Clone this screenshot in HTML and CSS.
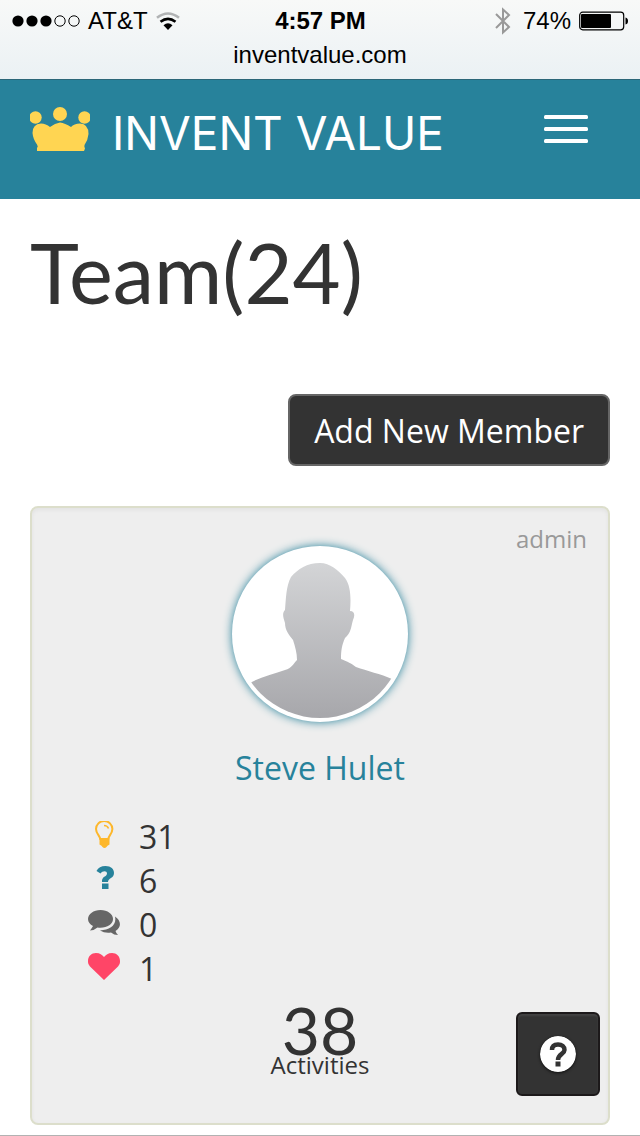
FILE: index.html
```html
<!DOCTYPE html>
<html lang="en">
<head>
<meta charset="utf-8">
<meta name="viewport" content="width=device-width, initial-scale=1">
<title>Team - Invent Value</title>
<link rel="stylesheet" href="styles.css">
</head>
<body>
<div class="browser-bar">
  <div class="status">
    <div class="status-left">
      <svg class="signal" width="68" height="12" viewBox="0 0 68 12" aria-hidden="true">
        <circle cx="6" cy="6" r="5.6"/><circle cx="20" cy="6" r="5.6"/><circle cx="34" cy="6" r="5.6"/>
        <g fill="none" stroke="#000"><circle cx="48" cy="6" r="5.2"/><circle cx="62" cy="6" r="5.2"/></g>
      </svg>
      <span>AT&amp;T</span>
      <svg width="24" height="18" viewBox="0 0 24 18" aria-hidden="true">
        <g fill="none" stroke-width="2.6"><path d="M1 5.8Q12-2.8 23 5.8" stroke="#b1b3b4"/><path d="M4.5 9.8Q12 4 19.5 9.8" stroke="#000"/></g>
        <path d="M7.5 13.2Q12 9.5 16.5 13.2L12 18Z"/>
      </svg>
    </div>
    <strong class="time">4:57 PM</strong>
    <div class="status-right">
      <svg width="16" height="28" viewBox="0 0 16 28" fill="none" stroke="#999" stroke-width="2" aria-hidden="true"><path d="M1 7 14 20 8 25.5V2.5L14 8 1 21"/></svg>
      <span>74%</span>
      <svg width="50" height="20" viewBox="0 0 50 20" aria-hidden="true">
        <rect x=".7" y="1.2" width="44" height="17.6" rx="3" fill="none" stroke="#000" stroke-width="1.2"/>
        <rect x="2" y="3" width="30" height="14" rx="1"/>
        <path d="M46.5 6.5Q49 7 49 10T46.5 13.5Z"/>
      </svg>
    </div>
  </div>
  <div class="address">inventvalue.com</div>
</div>

<header class="site-header">
  <a class="brand" href="#">
    <svg width="60" height="44" viewBox="0 0 60 44" fill="#ffd552" aria-hidden="true">
      <circle cx="30" cy="7" r="7"/><circle cx="5.5" cy="10.5" r="6.2"/><circle cx="54.5" cy="10.5" r="6.2"/>
      <path d="M7 44V41Q8.500 39.500 7 37.500 3 32 2.500 26 2.500 17 11 16.500 16 16.500 20 20 25 16 30 15.500 35 16 41 20 44 16.500 50 16.500 58.500 17 58.500 27 58 33 54.500 38 54 39.500 55 41.500L54 44Z"/>
    </svg>
    <span>INVENT VALUE</span>
  </a>
  <button class="menu" type="button" aria-label="Menu">
    <svg width="44" height="28" viewBox="0 0 44 28" fill="#fff" aria-hidden="true"><rect width="44" height="4" rx="1.5"/><rect y="12" width="44" height="4" rx="1.5"/><rect y="24" width="44" height="4" rx="1.5"/></svg>
  </button>
</header>

<main class="page">
  <h1>Team(24)</h1>
  <div class="actions"><button class="add" type="button">Add New Member</button></div>
  <article class="card">
    <span class="role">admin</span>
    <svg class="avatar" width="176" height="176" viewBox="0 0 176 176" aria-hidden="true">
      <defs>
        <linearGradient id="shade" gradientUnits="userSpaceOnUse" x1="0" y1="18" x2="0" y2="172"><stop stop-color="#d3d4d6"/><stop offset="1" stop-color="#a7a7ab"/></linearGradient>
        <clipPath id="disc"><circle cx="88" cy="88" r="84"/></clipPath>
      </defs>
      <path clip-path="url(#disc)" fill="url(#shade)" d="M88 17C75 17 66 23 59 31 54 40 54 53 53 64 50 67 51 71 53 77 53 84 57 89 61 94 63 100 65 107 65 114 61 118 60 122 53 124 42 128 28 131 18 137L8 176H168L160 133C149 128 135 125 124 121 119 117 116 116 109 113 109 104 110 99 113 92 119 87 119 81 121 74 123 70 123 65 118 65 119 53 119 40 113 32 106 24 98 17 88 17Z"/>
    </svg>
    <a class="name" href="#">Steve Hulet</a>
    <ul class="stats">
      <li><svg width="32" height="32" viewBox="0 0 32 32" aria-hidden="true"><g fill="none" stroke="#fdb72b" stroke-width="2"><path d="M12.500 19C12.500 15 8 13 8 8A8.200 8 0 0 1 24.400 8C24.400 13 20 15 20 19"/><path d="M16 4.500Q19.500 4.500 20.500 7.500" stroke-width="1.500"/></g><path fill="#fdb72b" d="M11.500 17H21.500V23.500Q19 24.500 18.500 26 16.500 28 14.500 26 14 24.500 11.500 23.500Z"/></svg><span>31</span></li>
      <li><svg width="32" height="32" viewBox="0 0 32 32" fill="#27829b" aria-hidden="true"><path d="M8.500 6Q11 1 17.500 1C23 1 26 4 26 8 26 13.500 20 13 20 17H14C13.500 11 19 12 19 8.500 19 5.500 14.500 5.500 12.500 8.500Z"/><rect x="14" y="18.500" width="6.500" height="5.500"/></svg><span>6</span></li>
      <li><svg width="32" height="32" viewBox="0 0 32 32" fill="#666" aria-hidden="true"><path d="M12.500 1C5.500 1 0 5 0 10 0 13 2 15.500 5 17Q4 19 2 21.500 6 21.500 9.500 18.500C18 19.500 25 16 25 10 25 5 19.500 1 12.500 1Z"/><path d="M27 7.500C33 11.500 34 18 27.500 22Q28 24 30 26 26 26 23 23.500 17 24.500 12 21.500C22 21 29 16 27 7.500Z"/></svg><span>0</span></li>
      <li><svg width="32" height="32" viewBox="0 0 32 32" fill="#ff4567" aria-hidden="true"><path d="M16 27 2 13.500C0 11 0 9.500 0 8 0 3 3.500 0 8 0 12 0 14 2 16 4 18 2 20 0 24 0 28.500 0 32 3 32 8 32 9.500 32 11 30 13.500Z"/></svg><span>1</span></li>
    </ul>
    <div class="total"><span class="count">38</span><span class="label">Activities</span></div>
  </article>
</main>

<button class="help" type="button" aria-label="Help">
  <svg width="36" height="36" viewBox="0 0 36 36" aria-hidden="true"><circle cx="18" cy="18" r="18" fill="#fff"/><path d="M12 14C12 10 14 8.500 18 8.500S24.500 10.500 24.500 14C24.500 18 18 18 18 24" fill="none" stroke="#333" stroke-width="4.500"/><rect x="15.500" y="25.500" width="5" height="5" fill="#333"/></svg>
</button>
</body>
</html>
```
FILE: styles.css
```css
* { box-sizing: border-box; }
body {
  margin: 0;
  min-height: 100vh;
  background: #fff;
  border-bottom: 1px solid #b2b2b2;
  color: #333;
  font-family: "Open Sans", sans-serif;
}
button { font: inherit; cursor: pointer; }
a { text-decoration: none; }
svg { display: block; flex: none; }

.browser-bar {
  height: 80px;
  padding-top: 5px;
  border-bottom: 1px solid #2b6678;
  background: linear-gradient(#f8f9f8, #ebf1f4);
  color: #000;
  font-family: "Liberation Sans", Arial, sans-serif;
  font-size: 24px;
}
.status {
  display: grid;
  grid-template-columns: 1fr auto 1fr;
  align-items: center;
  height: 32px;
  padding: 0 11px 0 12px;
}
.status-left, .status-right { display: flex; align-items: center; gap: 8px; }
.status-right { justify-content: flex-end; }
.status-right span { margin-left: 4px; }
.address { line-height: 36px; text-align: center; }

.site-header {
  display: flex;
  align-items: flex-start;
  justify-content: space-between;
  height: 119px;
  padding: 27px 52px 0 30px;
  background: #27829b;
}
.brand {
  display: flex;
  gap: 22px;
  color: #fff;
  font: 400 46px/52px Inter, sans-serif;
  white-space: nowrap;
}
.menu { margin-top: 8px; padding: 0; border: 0; background: none; }

.page { padding: 21px 30px 9px; }
h1 { margin: 0; font: 400 83px/104px Lato, sans-serif; }
.actions { display: flex; justify-content: flex-end; margin: 70px 0 40px; }
.add {
  height: 72px;
  padding: 0 24px;
  border: 2px solid #666;
  border-radius: 8px;
  background: #333;
  color: #fff;
  font-size: 32px;
}

.card {
  position: relative;
  display: flex;
  flex-direction: column;
  align-items: center;
  padding: 38px 56px 46px;
  border: 2px solid #dcdecb;
  border-radius: 8px;
  background: #eee;
  box-shadow: inset 0 2px 4px rgba(0, 0, 0, .05);
}
.role { position: absolute; top: 14px; right: 21px; color: #999; font-size: 24px; line-height: 34px; }
.avatar { border-radius: 50%; background: #fff; box-shadow: 0 0 10px #27829b; }
.name { margin-top: 24px; color: #27829b; font-size: 32px; line-height: 44px; }
.stats { align-self: stretch; margin: 25px 0 0; padding: 0; list-style: none; }
.stats li { display: flex; gap: 19px; height: 44px; font-size: 32px; line-height: 44px; }
.stats svg { margin-top: 6px; }
.total { display: flex; flex-direction: column; align-items: center; margin-top: 16px; }
.count { font: 400 66px/46px Lato, sans-serif; }
.label { font-size: 24px; line-height: 24px; }

.help {
  position: fixed;
  right: 40px;
  bottom: 40px;
  display: grid;
  place-items: center;
  width: 84px;
  height: 84px;
  padding: 0;
  border: 2px solid #1c191a;
  border-radius: 6px;
  background: #333;
  box-shadow: inset 0 2px 2px rgba(255, 255, 255, .08);
}
.help svg { border-radius: 50%; box-shadow: 0 1px 3px #111; }
```
